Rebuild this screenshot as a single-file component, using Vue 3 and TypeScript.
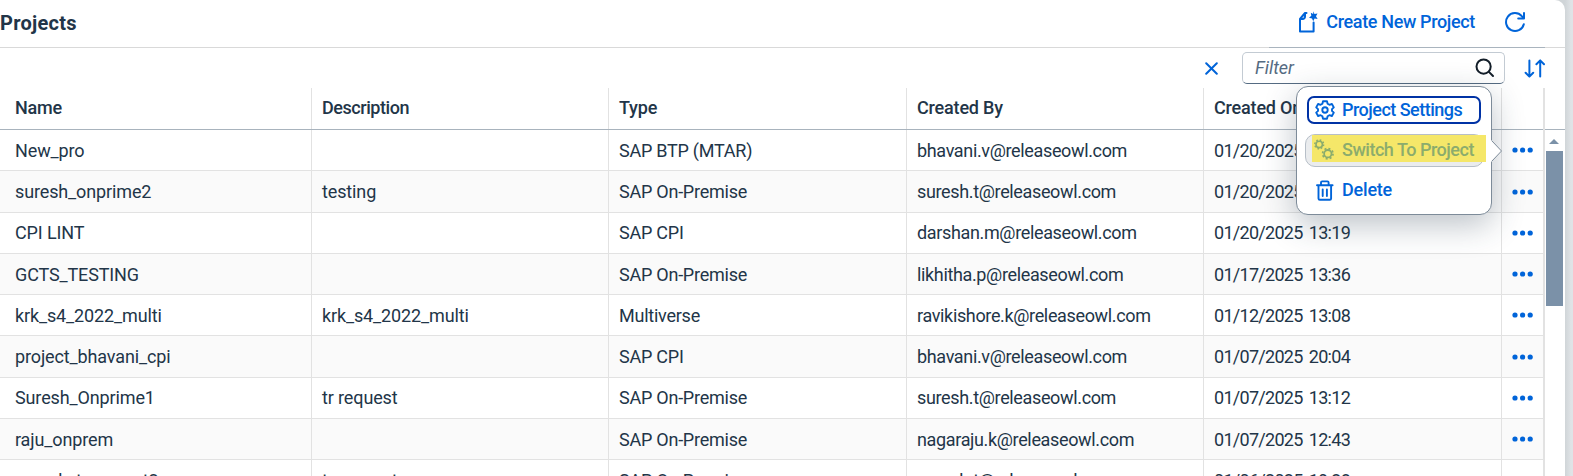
<script setup lang="ts">
interface Project {
  name: string
  description: string
  type: string
  createdBy: string
  createdOn: string
}

const columns: string[] = ['Name', 'Description', 'Type', 'Created By', 'Created On']

const projects: Project[] = [
  { name: 'New_pro', description: '', type: 'SAP BTP (MTAR)', createdBy: 'bhavani.v@releaseowl.com', createdOn: '01/20/2025 13:45' },
  { name: 'suresh_onprime2', description: 'testing', type: 'SAP On-Premise', createdBy: 'suresh.t@releaseowl.com', createdOn: '01/20/2025 13:31' },
  { name: 'CPI LINT', description: '', type: 'SAP CPI', createdBy: 'darshan.m@releaseowl.com', createdOn: '01/20/2025 13:19' },
  { name: 'GCTS_TESTING', description: '', type: 'SAP On-Premise', createdBy: 'likhitha.p@releaseowl.com', createdOn: '01/17/2025 13:36' },
  { name: 'krk_s4_2022_multi', description: 'krk_s4_2022_multi', type: 'Multiverse', createdBy: 'ravikishore.k@releaseowl.com', createdOn: '01/12/2025 13:08' },
  { name: 'project_bhavani_cpi', description: '', type: 'SAP CPI', createdBy: 'bhavani.v@releaseowl.com', createdOn: '01/07/2025 20:04' },
  { name: 'Suresh_Onprime1', description: 'tr request', type: 'SAP On-Premise', createdBy: 'suresh.t@releaseowl.com', createdOn: '01/07/2025 13:12' },
  { name: 'raju_onprem', description: '', type: 'SAP On-Premise', createdBy: 'nagaraju.k@releaseowl.com', createdOn: '01/07/2025 12:43' },
  { name: 'suresh_transport2', description: 'tr request', type: 'SAP On-Premise', createdBy: 'suresh.t@releaseowl.com', createdOn: '01/06/2025 19:38' },
]
</script>

<template>
  <div class="page">
    <section class="card">
      <header class="titlebar">
        <h1>Projects</h1>
        <button class="create">
          <svg width="20" height="22" viewBox="0 0 20 22" fill="none" stroke="currentColor" stroke-width="2" stroke-linejoin="round" stroke-linecap="round">
            <path d="M8.500 2H7L2 8v12.500h13.600V11.500M7 2.200V5.600Q7 7.600 5 7.900H2.300" />
            <path d="M15.200.2l1.300 2.800 3-.4-1.500 2.700 1.600 2.600-3-.4-1.400 2.700-1.200-2.800-3-.6 2.300-2-.5-3 2.400 1.300z" fill="currentColor" stroke="none" />
          </svg>
          <span>Create New Project</span>
        </button>
        <button class="refresh">
          <svg width="22" height="22" viewBox="0 0 22 22" fill="none" stroke="currentColor" stroke-width="2" stroke-linejoin="round" stroke-linecap="round">
            <path d="M19.800 13.200A9 9 0 1 1 17.800 5.100L20 7.400M20 2v5.600h-5.800" />
          </svg>
        </button>
      </header>

      <div class="toolbar">
        <svg class="clear" width="13" height="13" viewBox="0 0 13 13" fill="none" stroke="currentColor" stroke-width="2" stroke-linecap="round">
          <path d="M1.200 1.200 11.800 11.800M11.800 1.200 1.200 11.800" />
        </svg>
        <div class="filter">
          <span>Filter</span>
          <svg width="20" height="20" viewBox="0 0 20 20" fill="none" stroke="currentColor" stroke-width="2" stroke-linecap="round">
            <circle cx="8.600" cy="8.600" r="7.100" />
            <path d="M13.900 13.900 18 18" />
          </svg>
        </div>
        <svg class="sort" width="22" height="19" viewBox="0 0 22 19" fill="none" stroke="currentColor" stroke-width="2" stroke-linecap="round" stroke-linejoin="round">
          <path d="M5.400 1.500v16M1.600 13.800l3.800 3.800 3.800-3.800M16.200 17.500v-16M12.400 5.200l3.800-3.800L20 5.200" />
        </svg>
      </div>

      <div class="grid">
        <div class="table">
          <div class="row head">
            <div v-for="c in columns" :key="c" class="cell">{{ c }}</div>
            <div class="cell"></div>
          </div>
          <div v-for="(p, i) in projects" :key="i" class="row">
            <div class="cell">{{ p.name }}</div>
            <div class="cell">{{ p.description }}</div>
            <div class="cell type">{{ p.type }}</div>
            <div class="cell mail">{{ p.createdBy }}</div>
            <div class="cell date">{{ p.createdOn }}</div>
            <div class="cell more">
              <svg width="22" height="6" viewBox="0 0 22 6" fill="currentColor">
                <circle cx="3" cy="3" r="2.600" />
                <circle cx="10.600" cy="3" r="2.600" />
                <circle cx="18.200" cy="3" r="2.600" />
              </svg>
            </div>
          </div>
        </div>
        <div class="scroll">
          <div class="scrollhead"></div>
          <svg class="up" width="10" height="5" viewBox="0 0 10 5"><path d="M0 5 5 0l5 5z" fill="#7b91a8" /></svg>
          <div class="thumb"></div>
        </div>
      </div>
    </section>

    <div class="menu">
      <svg class="tip" width="12" height="24" viewBox="0 0 12 24">
        <path d="M0 1 10.500 12 0 23z" fill="#fff" />
        <path d="M1 2 10.500 12 1 22" fill="none" stroke="#7d8b99" />
      </svg>
      <button class="item focused">
        <svg width="20" height="20" viewBox="0 0 20 20" fill="none" stroke="currentColor" stroke-width="1.900" stroke-linejoin="round">
          <path d="M8 1.200h4l.6 2.500 1.800 1.100 2.500-.8 1.900 3.400-1.800 1.700v1.800l1.800 1.700-1.900 3.400-2.500-.8-1.800 1.100-.6 2.500H8l-.6-2.500-1.800-1.100-2.500.8-1.900-3.400L3 10.900V9.100L1.200 7.400 3.100 4l2.500.8 1.800-1.100z" />
          <circle cx="10" cy="10" r="2.700" />
        </svg>
        <span>Project Settings</span>
      </button>
      <button class="item switch">
        <svg width="20" height="21" viewBox="0 0 20 21" fill="none" stroke="currentColor">
          <circle cx="5.200" cy="5.400" r="3.200" stroke-width="1.600" />
          <circle cx="5.200" cy="5.400" r="4.400" stroke-width="1.500" stroke-dasharray="1.600 1.856" />
          <circle cx="13.800" cy="14.700" r="3.700" stroke-width="1.800" />
          <circle cx="13.800" cy="14.700" r="5.200" stroke-width="1.700" stroke-dasharray="2 2.084" />
        </svg>
        <span>Switch To Project</span>
      </button>
      <button class="item delete">
        <svg width="20" height="21" viewBox="0 0 20 21" fill="none" stroke="currentColor" stroke-width="1.900" stroke-linecap="round" stroke-linejoin="round">
          <path d="M2 5.200h15.600M6 5V2.600Q6 1.400 7.200 1.400h5.200q1.200 0 1.200 1.200V5M3.500 5.400v13q0 1.300 1.300 1.300h10q1.300 0 1.300-1.300v-13M7.700 9.500v6.600M11.900 9.500v6.600" />
        </svg>
        <span>Delete</span>
      </button>
    </div>
  </div>
</template>

<style>
body {
  margin: 0;
  overflow: hidden;
}
</style>

<style scoped>
.page {
  position: relative;
  width: 1573px;
  height: 476px;
  overflow: hidden;
  background: linear-gradient(to right, #d0d5d8 1565px, #dfe3e6 1571px);
  font-family: Roboto, "Liberation Sans", sans-serif;
  font-size: 18px;
  color: #223548;
}
button {
  display: flex;
  align-items: center;
  margin: 0;
  padding: 0;
  border: 0;
  background: none;
  font: inherit;
  font-weight: 500;
  color: #0064d9;
}
svg {
  display: block;
  flex: none;
}
.card {
  display: flex;
  flex-direction: column;
  width: 1565px;
  height: 476px;
  background: #fff;
  border-top-right-radius: 10px;
  overflow: hidden;
}
.titlebar {
  display: flex;
  align-items: center;
  box-sizing: border-box;
  height: 48px;
  flex: none;
  padding: 0 39px 4px 0;
  background:
    linear-gradient(#a9b4be, #a9b4be) 1269px 100% / 276px 1px no-repeat,
    linear-gradient(#d9d9d9, #d9d9d9) 0 100% / 100% 1px no-repeat;
}
h1 {
  flex: 1;
  margin: 0;
  padding-top: 2px;
  font-size: 20px;
  font-weight: 700;
  line-height: 24px;
  letter-spacing: 0.250px;
}
.create {
  gap: 8px;
  letter-spacing: -0.350px;
}
.create span {
  padding-bottom: 2px;
}
.refresh {
  margin-left: 29px;
}
.toolbar {
  display: flex;
  align-items: center;
  justify-content: flex-end;
  height: 40px;
  flex: none;
  padding-right: 19px;
  color: #0064d9;
}
.clear {
  margin-right: 24px;
}
.filter {
  display: flex;
  align-items: center;
  justify-content: space-between;
  box-sizing: border-box;
  width: 263px;
  height: 32px;
  padding: 0 9px 0 12px;
  border: 1px solid #c3cbd3;
  border-bottom-color: #556b82;
  border-radius: 5px;
  color: #556b82;
  font-style: italic;
}
.filter span {
  padding-bottom: 2px;
}
.filter svg {
  color: #131e29;
}
.sort {
  margin-left: 19px;
}
.grid {
  display: flex;
  flex: 1;
}
.table {
  width: 1543px;
  border-right: 2px solid #e2e2e2;
}
.row {
  display: grid;
  grid-template-columns: 312px 297px 298px 297px 298px 41px;
  box-sizing: border-box;
  height: 41.250px;
  border-bottom: 1px solid #e2e2e2;
  letter-spacing: -0.130px;
}
.row:nth-child(odd) {
  background: #fafafa;
}
.row.head {
  height: 42px;
  border-bottom-color: #a8b3bd;
  background: #fff;
  font-weight: 500;
  letter-spacing: -0.180px;
}
.head .cell:nth-child(2) {
  letter-spacing: -0.450px;
}
.cell {
  display: flex;
  align-items: center;
  padding-top: 0.600px;
  padding-left: 10px;
  border-right: 1px solid #e2e2e2;
  white-space: nowrap;
}
.head .cell {
  padding-top: 0;
  padding-bottom: 2px;
}
.cell:first-child {
  padding-left: 15px;
}
.cell:last-child {
  border-right: 0;
}
.type {
  letter-spacing: -0.240px;
}
.mail {
  letter-spacing: -0.350px;
}
.date {
  letter-spacing: -0.720px;
  word-spacing: 2.500px;
}
.more {
  color: #0064d9;
}
.scroll {
  display: flex;
  flex-direction: column;
  width: 20px;
}
.scrollhead {
  box-sizing: border-box;
  width: 20px;
  height: 42px;
  border-bottom: 1px solid #a8b3bd;
}
.up {
  margin: 9px 0 7px 4px;
}
.thumb {
  width: 17px;
  height: 155px;
  margin-left: 1px;
  background: #7b91a8;
}
.menu {
  position: absolute;
  left: 1296px;
  top: 86px;
  display: flex;
  flex-direction: column;
  box-sizing: border-box;
  width: 196px;
  height: 129px;
  padding: 9px 7px 0 8px;
  border: 1px solid #7d8b99;
  border-radius: 12px;
  background: #fff;
  box-shadow: 0 10px 32px rgba(34, 53, 72, 0.3);
}
.tip {
  position: absolute;
  left: 194px;
  top: 52px;
}
.item {
  box-sizing: border-box;
  gap: 7px;
  white-space: nowrap;
}
.focused {
  width: 174px;
  height: 28px;
  margin-left: 2px;
  padding-left: 6px;
  border: 2px solid #0032a5;
  border-radius: 7px;
  letter-spacing: -0.520px;
}
.focused span,
.delete span {
  padding-bottom: 2px;
}
.switch {
  position: relative;
  width: 179px;
  height: 33px;
  margin-top: 10px;
  padding: 0 0 3px 8px;
  border: 1px solid #b7bfc8;
  border-radius: 10px;
  background: #eaecee;
  color: #8bac6d;
  gap: 8px;
  letter-spacing: -0.480px;
}
.switch::before {
  content: "";
  position: absolute;
  left: 6px;
  top: 0;
  width: 174px;
  height: 27px;
  background: #f5e769;
}
.switch > * {
  position: relative;
}
.delete {
  height: 28px;
  margin-top: 9px;
  padding-left: 10px;
  letter-spacing: -0.200px;
}
</style>
